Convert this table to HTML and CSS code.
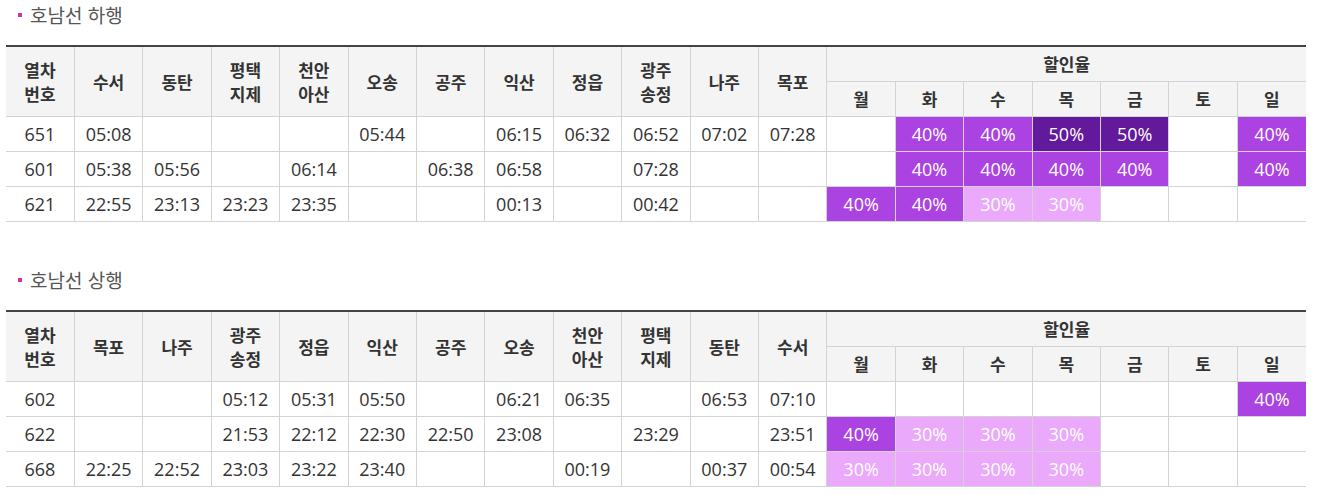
FILE: index.html
```html
<!DOCTYPE html>
<html lang="ko">
<head>
<meta charset="utf-8">
<title>호남선 할인율</title>
<link rel="stylesheet" href="styles.css">
</head>
<body>
<section class="block">
  <h3 class="title"><span class="dot"></span>호남선 하행</h3>
  <table class="tt">
    <thead>
      <tr class="h1">
        <th rowspan="2">열차<br>번호</th>
        <th rowspan="2">수서</th>
        <th rowspan="2">동탄</th>
        <th rowspan="2">평택<br>지제</th>
        <th rowspan="2">천안<br>아산</th>
        <th rowspan="2">오송</th>
        <th rowspan="2">공주</th>
        <th rowspan="2">익산</th>
        <th rowspan="2">정읍</th>
        <th rowspan="2">광주<br>송정</th>
        <th rowspan="2">나주</th>
        <th rowspan="2">목포</th>
        <th colspan="7">할인율</th>
      </tr>
      <tr class="h2">
        <th>월</th><th>화</th><th>수</th><th>목</th><th>금</th><th>토</th><th>일</th>
      </tr>
    </thead>
    <tbody>
      <tr>
        <td>651</td><td>05:08</td><td></td><td></td><td></td><td>05:44</td><td></td><td>06:15</td><td>06:32</td><td>06:52</td><td>07:02</td><td>07:28</td>
        <td></td><td class="d40">40%</td><td class="d40">40%</td><td class="d50">50%</td><td class="d50">50%</td><td></td><td class="d40">40%</td>
      </tr>
      <tr>
        <td>601</td><td>05:38</td><td>05:56</td><td></td><td>06:14</td><td></td><td>06:38</td><td>06:58</td><td></td><td>07:28</td><td></td><td></td>
        <td></td><td class="d40">40%</td><td class="d40">40%</td><td class="d40">40%</td><td class="d40">40%</td><td></td><td class="d40">40%</td>
      </tr>
      <tr>
        <td>621</td><td>22:55</td><td>23:13</td><td>23:23</td><td>23:35</td><td></td><td></td><td>00:13</td><td></td><td>00:42</td><td></td><td></td>
        <td class="d40">40%</td><td class="d40">40%</td><td class="d30">30%</td><td class="d30">30%</td><td></td><td></td><td></td>
      </tr>
    </tbody>
  </table>
</section>

<section class="block second">
  <h3 class="title"><span class="dot"></span>호남선 상행</h3>
  <table class="tt">
    <thead>
      <tr class="h1">
        <th rowspan="2">열차<br>번호</th>
        <th rowspan="2">목포</th>
        <th rowspan="2">나주</th>
        <th rowspan="2">광주<br>송정</th>
        <th rowspan="2">정읍</th>
        <th rowspan="2">익산</th>
        <th rowspan="2">공주</th>
        <th rowspan="2">오송</th>
        <th rowspan="2">천안<br>아산</th>
        <th rowspan="2">평택<br>지제</th>
        <th rowspan="2">동탄</th>
        <th rowspan="2">수서</th>
        <th colspan="7">할인율</th>
      </tr>
      <tr class="h2">
        <th>월</th><th>화</th><th>수</th><th>목</th><th>금</th><th>토</th><th>일</th>
      </tr>
    </thead>
    <tbody>
      <tr>
        <td>602</td><td></td><td></td><td>05:12</td><td>05:31</td><td>05:50</td><td></td><td>06:21</td><td>06:35</td><td></td><td>06:53</td><td>07:10</td>
        <td></td><td></td><td></td><td></td><td></td><td></td><td class="d40">40%</td>
      </tr>
      <tr>
        <td>622</td><td></td><td></td><td>21:53</td><td>22:12</td><td>22:30</td><td>22:50</td><td>23:08</td><td></td><td>23:29</td><td></td><td>23:51</td>
        <td class="d40">40%</td><td class="d30">30%</td><td class="d30">30%</td><td class="d30">30%</td><td></td><td></td><td></td>
      </tr>
      <tr>
        <td>668</td><td>22:25</td><td>22:52</td><td>23:03</td><td>23:22</td><td>23:40</td><td></td><td></td><td>00:19</td><td></td><td>00:37</td><td>00:54</td>
        <td class="d30">30%</td><td class="d30">30%</td><td class="d30">30%</td><td class="d30">30%</td><td></td><td></td><td></td>
      </tr>
    </tbody>
  </table>
</section>
</body>
</html>
```

FILE: styles.css
```css
html, body {
  margin: 0;
  padding: 0;
  background: #fff;
}
body {
  font-family: "Open Sans", "Noto Sans CJK KR", sans-serif;
  color: #333;
  padding: 0 0 0 6px;
}
.block {
  width: 1300px;
}
.second {
  margin-top: 43px;
}
.title {
  margin: 0 0 15px 0;
  height: 30px;
  line-height: 30px;
  font-size: 19px;
  font-weight: normal;
  color: #555;
  display: flex;
  align-items: center;
  padding-left: 12px;
  font-family: "Noto Sans CJK KR", sans-serif;
}
.dot {
  width: 4px;
  height: 4px;
  background: #d22fae;
  margin-right: 8px;
  margin-top: -1px;
}
.tt {
  width: 1300px;
  table-layout: fixed;
  border-collapse: collapse;
  border-top: 2px solid #444;
  font-size: 18px;
}
.tt th, .tt td {
  border: 1px solid #d3d3d3;
  text-align: center;
  padding: 0;
  vertical-align: middle;
}
.tt tr > :first-child {
  border-left: none;
}
.tt tr > :last-child {
  border-right: none;
}
.tt th {
  background: #f4f4f4;
  font-family: "Noto Sans CJK KR", sans-serif;
  font-weight: 700;
  font-size: 17px;
  line-height: 24px;
  color: #333;
}
.tt tr.h1 th,
.tt tr.h2 th {
  height: 34px;
}
.tt td {
  height: 34px;
  line-height: 24px;
}
.tt td.d40 {
  background: #ab43e2;
  color: #fff;
}
.tt td.d50 {
  background: #63199b;
  color: #fff;
}
.tt td.d30 {
  background: #eaa9fb;
  color: #fff;
}
```
